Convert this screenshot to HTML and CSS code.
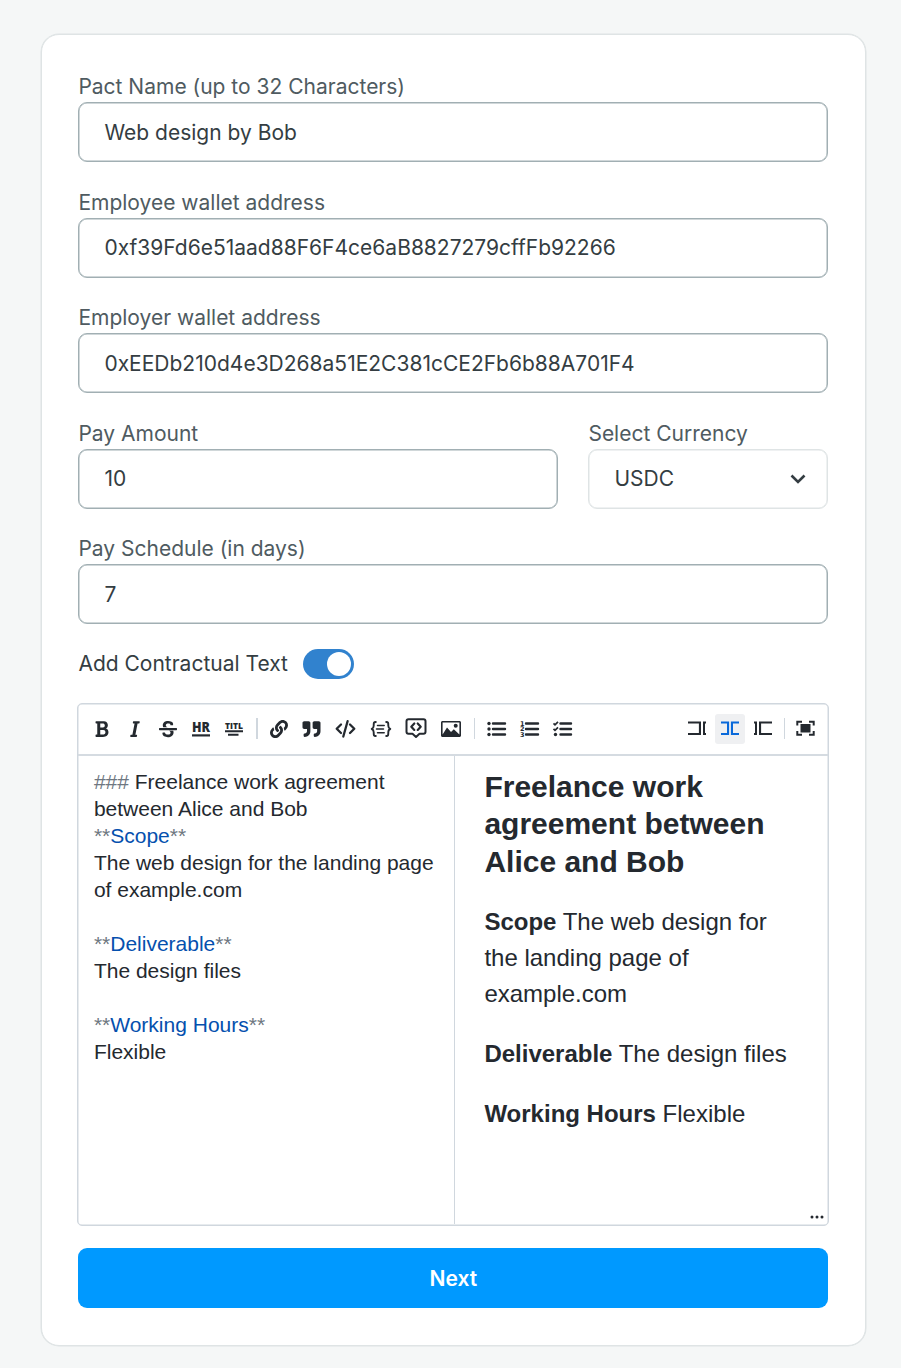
FILE: index.html
```html
<!DOCTYPE html>
<html lang="en">
<head>
<meta charset="utf-8">
<title>Create Pact</title>
<link rel="stylesheet" href="styles.css">
</head>
<body>
<main class="card">
  <label class="field"><span class="label">Pact Name (up to 32 Characters)</span><span class="input">Web design by Bob</span></label>
  <label class="field"><span class="label">Employee wallet address</span><span class="input">0xf39Fd6e51aad88F6F4ce6aB8827279cffFb92266</span></label>
  <label class="field"><span class="label">Employer wallet address</span><span class="input">0xEEDb210d4e3D268a51E2C381cCE2Fb6b88A701F4</span></label>
  <div class="row">
    <label class="field amount"><span class="label">Pay Amount</span><span class="input">10</span></label>
    <label class="field currency"><span class="label">Select Currency</span><span class="input select">USDC
      <svg width="16" height="10" viewBox="0 0 16 10"><path d="M1.5 1.5 8 8l6.500-6.500" fill="none" stroke="#343d42" stroke-width="2.600"/></svg></span></label>
  </div>
  <label class="field"><span class="label">Pay Schedule (in days)</span><span class="input">7</span></label>
  <div class="toggle-row"><span>Add Contractual Text</span><span class="switch"><span class="knob"></span></span></div>

  <section class="editor">
    <div class="toolbar">
      <div class="tools">
        <span class="tool"><svg width="18" height="18" viewBox="0 0 384 512"><path d="M304.793 243.891c33.639-18.537 53.657-54.16 53.657-95.693 0-48.236-26.25-87.626-68.626-104.179C265.138 34.01 240.849 32 209.661 32H24c-8.837 0-16 7.163-16 16v33.049c0 8.837 7.163 16 16 16h33.113v318.53H24c-8.837 0-16 7.163-16 16V464c0 8.837 7.163 16 16 16h195.690c24.203 0 44.834-1.289 66.866-7.584C337.520 457.193 376 410.647 376 350.014c0-52.168-26.573-91.684-71.207-106.123zM142.217 100.809h67.444c16.294 0 27.536 2.019 37.525 6.717 15.828 8.479 24.906 26.502 24.906 49.446 0 35.029-20.320 56.790-53.029 56.790h-76.846V100.809zm112.642 305.475c-10.140 4.056-22.677 4.907-31.409 4.907h-81.233V281.943h84.367c39.645 0 63.057 25.380 63.057 63.551.001 28.425-13.660 52.483-34.782 60.790z"/></svg></span>
        <span class="tool"><svg width="18" height="18" viewBox="0 0 320 512"><path d="M204.758 416h-33.849l62.092-320h40.725a16 16 0 0 0 15.704-12.937l6.242-32C297.599 41.184 290.034 32 279.968 32H120.235a16 16 0 0 0-15.704 12.937l-6.242 32C96.362 86.816 103.927 96 113.993 96h33.846l-62.090 320H46.278a16 16 0 0 0-15.704 12.935l-6.245 32C22.402 470.815 29.967 480 40.034 480h158.479a16 16 0 0 0 15.704-12.935l6.245-32c1.927-9.880-5.638-19.065-15.704-19.065z"/></svg></span>
        <span class="tool"><svg width="18" height="18" viewBox="0 0 512 512"><path d="M496 288H16c-8.837 0-16-7.163-16-16v-32c0-8.837 7.163-16 16-16h480c8.837 0 16 7.163 16 16v32c0 8.837-7.163 16-16 16zm-214.666 16c27.258 12.937 46.524 28.683 46.524 56.243 0 33.108-28.977 53.676-75.621 53.676-32.325 0-76.874-12.080-76.874-44.271V368c0-8.837-7.164-16-16-16H113.750c-8.836 0-16 7.163-16 16v19.204c0 66.845 77.717 101.820 154.487 101.820 88.578 0 162.013-45.438 162.013-134.424 0-19.815-3.618-36.417-10.143-50.600H281.334zm-30.952-96c-32.422-13.505-56.836-28.946-56.836-59.683 0-33.920 30.901-47.406 64.962-47.406 42.647 0 64.962 16.593 64.962 32.985V136c0 8.837 7.164 16 16 16h45.613c8.836 0 16-7.163 16-16v-30.318c0-52.438-71.725-79.875-142.575-79.875-85.203 0-150.726 40.972-150.726 125.646 0 22.710 4.665 41.176 12.777 56.547h129.823z"/></svg></span>
        <span class="tool"><svg width="18" height="18" viewBox="0 0 18 18"><text class="hr-text" x="0" y="12" textLength="18" lengthAdjust="spacingAndGlyphs">HR</text><path d="M0 14.300h18v2.200H0z"/></svg></span>
        <span class="tool"><svg width="18" height="18" viewBox="0 0 18 18"><text class="title-text" x="0" y="8.800" textLength="18" lengthAdjust="spacingAndGlyphs">TITL</text><path d="M0 10.300h18v2H0zM3 13.800h10.500v2H3z"/></svg></span>
        <span class="divider"></span>
        <span class="tool"><svg width="18" height="18" viewBox="0 0 512 512"><path d="M326.612 185.391c59.747 59.809 58.927 155.698.36 214.590-.11.12-.24.25-.36.37l-67.200 67.200c-59.270 59.270-155.699 59.262-214.960 0-59.270-59.260-59.270-155.700 0-214.960l37.106-37.106c9.840-9.840 26.786-3.300 27.294 10.606.648 17.722 3.826 35.527 9.690 52.721 1.986 5.822.567 12.262-3.783 16.612l-13.087 13.087c-28.026 28.026-28.905 73.660-1.155 101.960 28.024 28.579 74.086 28.749 102.325.510l67.200-67.190c28.191-28.191 28.073-73.757 0-101.830-3.701-3.694-7.429-6.564-10.341-8.569a16.037 16.037 0 0 1-6.947-12.606c-.396-10.567 3.348-21.456 11.698-29.806l21.054-21.055c5.521-5.521 14.182-6.199 20.584-1.731a152.482 152.482 0 0 1 20.522 17.197zM467.547 44.449c-59.261-59.262-155.690-59.270-214.960 0l-67.200 67.200c-.12.12-.25.25-.36.37-58.566 58.892-59.387 154.781.36 214.590a152.454 152.454 0 0 0 20.521 17.196c6.402 4.468 15.064 3.789 20.584-1.731l21.054-21.055c8.350-8.350 12.094-19.239 11.698-29.806a16.037 16.037 0 0 0-6.947-12.606c-2.912-2.005-6.640-4.875-10.341-8.569-28.073-28.073-28.191-73.639 0-101.830l67.200-67.190c28.239-28.239 74.300-28.069 102.325.510 27.750 28.300 26.872 73.934-1.155 101.960l-13.087 13.087c-4.350 4.350-5.769 10.790-3.783 16.612 5.864 17.194 9.042 34.999 9.690 52.721.509 13.906 17.454 20.446 27.294 10.606l37.106-37.106c59.271-59.259 59.271-155.699.001-214.959z"/></svg></span>
        <span class="tool"><svg width="19" height="18" viewBox="0 0 512 512"><path d="M464 32H336c-26.500 0-48 21.500-48 48v128c0 26.500 21.500 48 48 48h80v64c0 35.300-28.700 64-64 64h-8c-13.300 0-24 10.700-24 24v48c0 13.300 10.700 24 24 24h8c88.400 0 160-71.600 160-160V80c0-26.500-21.500-48-48-48zm-288 0H48C21.500 32 0 53.500 0 80v128c0 26.500 21.500 48 48 48h80v64c0 35.300-28.700 64-64 64h-8c-13.300 0-24 10.700-24 24v48c0 13.300 10.700 24 24 24h8c88.400 0 160-71.600 160-160V80c0-26.500-21.500-48-48-48z"/></svg></span>
        <span class="tool wide"><svg class="line" width="21" height="18" viewBox="0 0 21 18"><path stroke-width="2.300" d="M6 4.500 1.700 8.700 6 13M15 4.500l4.300 4.200L15 13M12.600 1.200 8.300 16.500"/></svg></span>
        <span class="tool wide"><svg class="line" width="20" height="18" viewBox="0 0 20 18"><path stroke-width="1.900" d="M4.800 2C2.600 2 2.700 3 2.700 5.800c0 2-.6 2.700-2 3.200 1.400.5 2 1.200 2 3.200 0 2.800-.1 3.800 2.100 3.800M15.200 2c2.200 0 2.100 1 2.100 3.800 0 2 .6 2.700 2 3.200-1.400.5-2 1.200-2 3.200 0 2.800.1 3.800-2.100 3.800"/><path stroke-width="1.500" d="M6.500 5.500h6.700M5.500 9h7M6.500 12.700h6.700"/></svg></span>
        <span class="tool wide"><svg class="line" width="22" height="21" viewBox="0 0 22 21"><path stroke-width="2" d="M3.500 1.300h15c1.200 0 2 .8 2 2v10.500c0 1.200-.8 2-2 2h-4L11 19l-3.500-3.200h-4c-1.200 0-2-.8-2-2V3.300c0-1.200.8-2 2-2z"/><path stroke-width="2.200" d="M9.300 5.500 6.300 8.700l3 3.200M12.700 5.500l3 3.200-3 3.200"/></svg></span>
        <span class="tool wide"><svg width="20" height="18" viewBox="0 0 20 18"><path fill-rule="evenodd" d="M1.500 1h17c.8 0 1.500.7 1.500 1.500v13c0 .8-.7 1.500-1.500 1.500h-17C.7 17 0 16.300 0 15.500v-13C0 1.700.7 1 1.500 1zM1.600 2.600v11.800L6 7.500l4 4.600 2.800-2.800 5.600 5.200V2.600z"/><circle cx="14.700" cy="5.800" r="2"/></svg></span>
        <span class="divider"></span>
        <span class="tool"><svg width="19" height="18" viewBox="0 0 19 18"><circle cx="2" cy="3.500" r="1.700"/><circle cx="2" cy="9" r="1.700"/><circle cx="2" cy="14.500" r="1.700"/><path class="bars" d="M6 3.500h12M6 9h12M6 14.500h12"/></svg></span>
        <span class="tool"><svg width="19" height="18" viewBox="0 0 19 18"><path class="bars" d="M6 3.500h12M6 9h12M6 14.500h12"/><text class="digit" x="0" y="5.700">1</text><text class="digit" x="0" y="11.300">2</text><text class="digit" x="0" y="17">3</text></svg></span>
        <span class="tool"><svg width="19" height="18" viewBox="0 0 19 18"><path class="bars" d="M7.500 3.500H18M7.500 9H18M7.500 14.500H18"/><path d="M.5 3.300 2 4.800 5 1.800M.5 8.800 2 10.300 5 7.300" fill="none" stroke="#24292f" stroke-width="1.700"/><circle cx="2.500" cy="14.500" r="1.700"/></svg></span>
      </div>
      <div class="tools view-tools">
        <span class="tool"><svg width="18" height="18" viewBox="0 0 18 18"><path d="M0 1.500h13V15H0v-2h10.900V3.500H0zM18 1.500v2h-1V13h1v2h-3V1.500z"/></svg></span>
        <span class="tool active"><svg width="18" height="18" viewBox="0 0 18 18"><path d="M0 1.500h8.100V15H0v-2h6V3.500H0zM18 1.500v2h-6V13h6v2H9.900V1.500z"/></svg></span>
        <span class="tool"><svg width="18" height="18" viewBox="0 0 18 18"><path d="M0 1.500h3V15H0v-2h1V3.500H0zM18 1.500v2H7.100V13H18v2H5V1.500z"/></svg></span>
        <span class="divider"></span>
        <span class="tool"><svg width="19" height="18" viewBox="0 0 19 18"><path d="M4.500 4h10v8.500h-10z"/><path d="M1.300 5.500V1.700H6M13 1.700h4.700v3.800M17.700 11v3.800H13M6 14.800H1.300V11" fill="none" stroke="#24292f" stroke-width="2"/></svg></span>
      </div>
    </div>
    <div class="panes">
      <div class="source"><span class="mark">###</span> Freelance work agreement between Alice and Bob
<span class="mark">**</span><span class="strong">Scope</span><span class="mark">**</span>
The web design for the landing page of example.com

<span class="mark">**</span><span class="strong">Deliverable</span><span class="mark">**</span>
The design files

<span class="mark">**</span><span class="strong">Working Hours</span><span class="mark">**</span>
Flexible</div>
      <div class="preview">
        <h3>Freelance work agreement between Alice and Bob</h3>
        <p><strong>Scope</strong> The web design for the landing page of example.com</p>
        <p><strong>Deliverable</strong> The design files</p>
        <p><strong>Working Hours</strong> Flexible</p>
      </div>
    </div>
    <svg class="grip" width="14" height="4" viewBox="0 0 14 4"><circle cx="2" cy="2" r="1.500"/><circle cx="7" cy="2" r="1.500"/><circle cx="12" cy="2" r="1.500"/></svg>
  </section>
  <button class="next" type="button">Next</button>
</main>
</body>
</html>
```

FILE: styles.css
```css
* { box-sizing: border-box; }
body {
  margin: 0;
  padding: 34px 35px 0 41px;
  height: 1368px;
  background: #f5f7f7;
  color: #343d42;
  font-family: Inter, sans-serif;
  font-size: 21px;
}
.card {
  height: 1312px;
  padding: 36.4px 36.6px 0 36.4px;
  background: #fff;
  border: 1px solid #dfe4e5;
  box-shadow: 0 0 0 .5px #dfe4e5;
  border-radius: 18px;
}
.field { display: block; margin-bottom: 24.5px; }
.label { display: block; height: 31px; line-height: 31px; color: #4f5b61; }
.input {
  display: flex;
  align-items: center;
  justify-content: space-between;
  height: 60px;
  padding: 0 25px;
  border: 1px solid #a1afb3;
  box-shadow: inset 0 0 0 .5px #a1afb3;
  border-radius: 9px;
}
.select { border-color: #dfe4e5; box-shadow: inset 0 0 0 .5px #dfe4e5; padding-right: 21px; }
.row { display: flex; gap: 30px; }
.amount { flex: 1; }
.currency { width: 240px; }
.toggle-row { display: flex; align-items: center; gap: 15px; height: 30px; }
.switch {
  display: flex;
  justify-content: flex-end;
  width: 51px;
  height: 30px;
  padding: 3px;
  border-radius: 15px;
  background: #3182ce;
}
.knob { width: 24px; height: 24px; border-radius: 50%; background: #fff; }
.editor {
  position: relative;
  height: 523px;
  margin: 24px -1px 0;
  border: 1px solid #d0d7de;
  box-shadow: inset 0 0 0 .5px #d0d7de;
  border-radius: 5px;
  color: #24292f;
  font-family: "Liberation Sans", Arial, sans-serif;
}
.toolbar {
  display: flex;
  justify-content: space-between;
  height: 52px;
  padding: 0 5px 0 9px;
  border-bottom: 2px solid #d5dbe1;
}
.tools { display: flex; align-items: center; }
.tool {
  display: flex;
  align-items: center;
  justify-content: center;
  width: 30px;
  height: 30px;
  margin-right: 3px;
  border-radius: 3px;
}
.tool svg { fill: #24292f; flex: none; overflow: visible; }
.tool.wide { width: 32px; }
.tool .line { fill: none; stroke: #24292f; stroke-linecap: round; stroke-linejoin: round; }
.tool .bars { stroke: #24292f; stroke-width: 2.4; stroke-linecap: round; }
.tool.active { background: #eff0f2; }
.tool.active svg { fill: #0969da; }
.hr-text { font: 800 14px "Open Sans", sans-serif; }
.title-text { font: 800 9.5px "Open Sans", sans-serif; }
.digit { font: bold 6.5px "DejaVu Sans", sans-serif; }
.divider { width: 1.5px; height: 21px; margin: 0 6px 0 4px; background: #d0d7de; }
.view-tools .divider { margin: 0 5px 0 3px; }
.panes { display: flex; height: 468px; }
.source {
  width: 376px;
  padding: 12px 15.5px 0;
  font-size: 21px;
  line-height: 27px;
  white-space: pre-wrap;
}
.mark { color: #6e7781; }
.strong { color: #0550ae; }
.preview {
  flex: 1;
  padding: 12px 30px 0 29px;
  border-left: 1px solid #d0d7de;
  font-size: 24px;
  line-height: 36px;
}
.preview h3 { margin: 0 0 24px; font-size: 30px; line-height: 37.5px; }
.preview p { margin: 0 0 24px; }
.grip { position: absolute; right: 4px; bottom: 6px; fill: #24292f; }
.next {
  display: block;
  width: 100%;
  height: 60px;
  margin-top: 22.5px;
  border: 0;
  border-radius: 9px;
  background: #0099ff;
  color: #fff;
  font: 600 21px Inter, sans-serif;
}
```
